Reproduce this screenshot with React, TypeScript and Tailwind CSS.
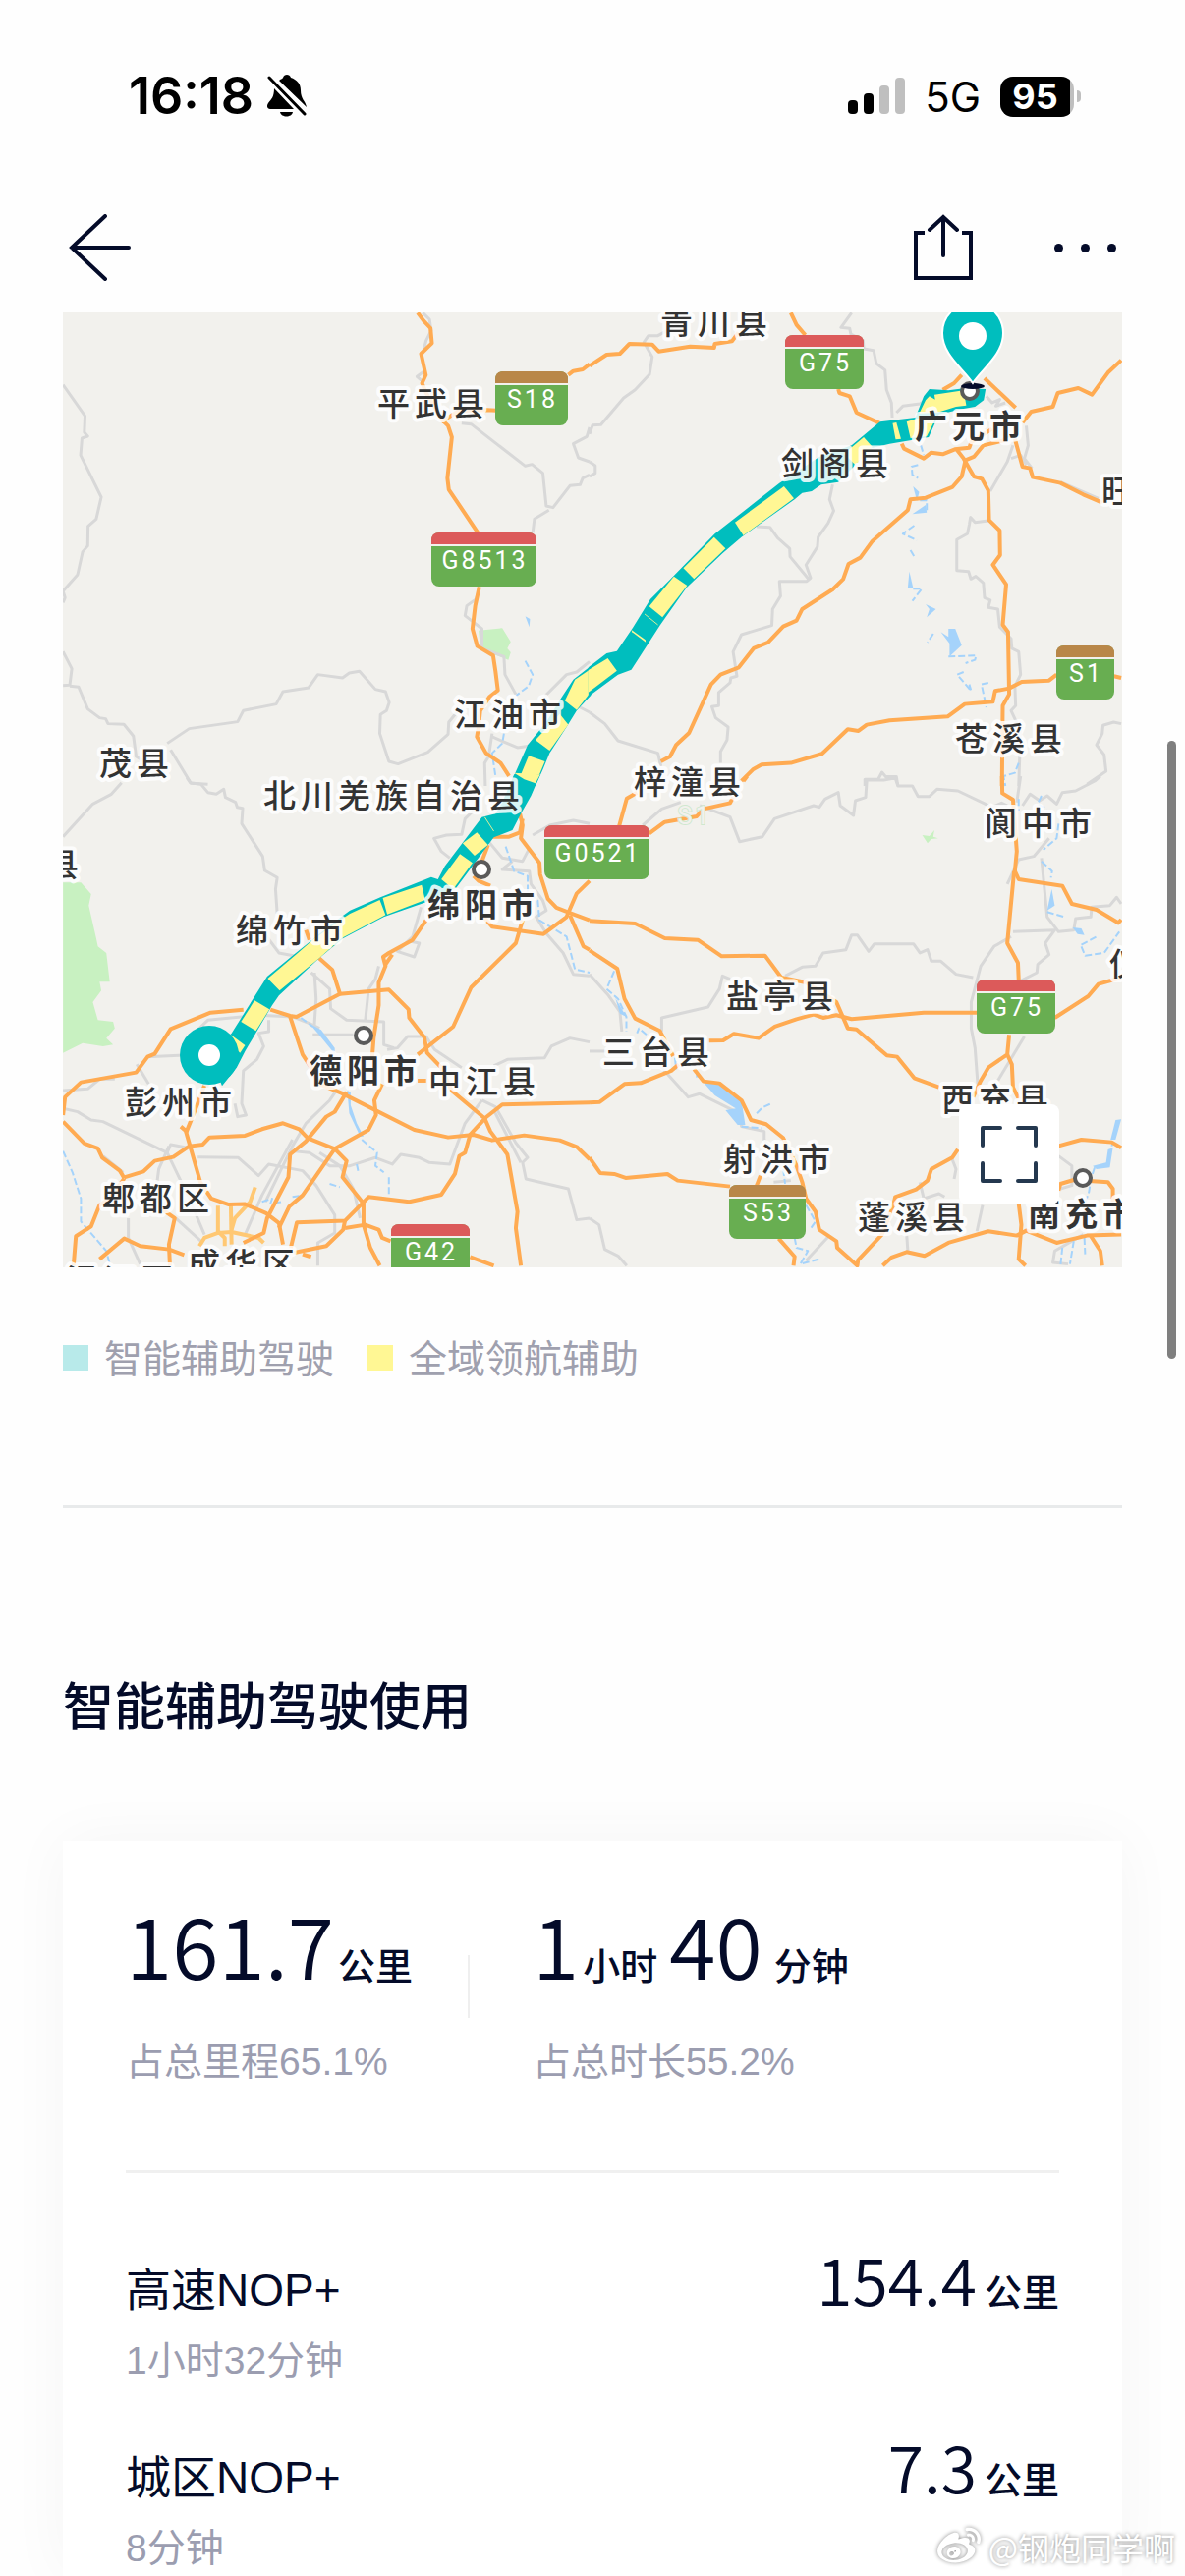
import type { ReactNode } from 'react'
import { FaWeibo } from 'react-icons/fa'

const LATIN = "font-['Liberation_Sans','Noto_Sans_CJK_SC',sans-serif]"
const NUMERIC = "font-['Noto_Sans_CJK_SC',sans-serif]"

type Tile = {
  transform: string
  parks: string[]
  minor: string[]
  water: string[]
  rivers: string[]
  roads: string[]
  cityRoads: string[]
  route: string
  nop: string[]
  nopTicks: string[]
}

// The base map is cut in four tiles, each with its own grid
const tiles: Tile[] = [
  {
    transform: 'translate(-4 -8) scale(.3444 .3333)',
    parks: ['1240,995 1310,988 1335,1030 1325,1050 1335,1062 1328,1085 1290,1070 1245,1045'],
    minor: [
      '12,245 77,340 75,390 85,402 68,408 64,460 125,588 110,655 86,677 85,737 70,755 55,825 12,875 18,895 12,910',
      '12,1060 38,1112 32,1162 12,1163',
      '32,1165 58,1168 85,1235 120,1262 138,1265 145,1280 192,1282 220,1318 228,1380 260,1400',
      '320,1340 385,1295 528,1274 545,1240 642,1220 662,1182 738,1170 765,1130 838,1140 858,1125 888,1120 935,1175 965,1182 976,1215 968,1240 950,1252 948,1310 975,1395 1002,1403 1090,1367 1150,1312 1152,1275 1180,1240',
      '330,1360 390,1462 440,1465',
      '1190,362 1218,365 1378,493 1398,488 1430,515 1440,615 1460,620 1510,553 1540,550 1548,530 1568,520',
      '1448,628 1405,655 1400,697',
      '1568,375 1560,403 1520,425 1535,468 1568,480',
      '1075,25 1095,45 1100,80 1085,110 1075,150',
      '1078,205 1058,220 1075,235',
      '1242,870 1232,900 1205,920 1200,950 1250,990 1250,1050 1315,1075 1318,1130 1350,1190',
      '1437,1195 1500,1130 1530,1122 1568,1090',
      '1500,1200 1540,1230 1568,1245',
      '1280,1320 1355,1353 1390,1348',
      '1280,1310 1270,1380 1258,1400 1260,1470',
    ],
    water: ['1378,952 1392,960 1390,985'],
    rivers: ['1378,1088 1400,1130 1388,1165 1350,1195', '1315,1310 1310,1340 1280,1370 1290,1440'],
    roads: [
      '1060,25 1078,50 1098,72 1102,118 1070,150 1084,215 1073,240 1085,270 1135,355 1150,370 1161,405 1148,530 1152,565 1238,697',
      '1130,358 1180,325 1265,322 1292,323',
      '1505,215 1520,203 1548,198 1568,182',
      '1242,862 1230,920 1222,990 1236,1043 1283,1072 1290,1120 1297,1178 1272,1198 1245,1240 1240,1290 1235,1320 1262,1370 1305,1400 1330,1440',
    ],
    cityRoads: [],
    route: '1572,1103 1520,1145 1485,1200 1440,1275 1385,1345 1340,1450 1408,1470 1430,1420 1450,1370 1500,1290 1530,1240 1572,1193',
    nop: [
      '1572,1112 1525,1145 1495,1210 1530,1238 1572,1182',
      '1480,1250 1505,1283 1450,1362 1408,1330',
      '1388,1378 1436,1395 1410,1460 1363,1440',
    ],
    nopTicks: [],
  },
  {
    transform: 'translate(536 -8) scale(.3865 .3333)',
    parks: [],
    minor: [
      '235,60 180,95 155,95 143,115 165,160 158,213 120,260 90,285 30,367 8,368 0,395',
      '0,480 15,492 15,515 0,525',
      '690,25 662,70 685,73 688,90 720,110 722,135 748,140 755,180 778,200 782,260 795,300 797,345',
      '808,330 825,310 870,303 920,265',
      '1045,280 1060,300 1080,290 1070,310 1095,300',
      '1115,430 1100,480 1055,570',
      '1150,370 1155,430 1145,470 1165,500',
      '1110,470 1135,460 1150,490',
      '640,550 632,595 643,630 628,668 602,710 600,740 570,795 582,835 572,845 500,845 503,890 482,930 480,980 400,1008 378,1060 388,1135 372,1140 370,1155 340,1185 340,1225 322,1228 332,1262 365,1290 362,1330 345,1365 345,1400',
      '440,678 475,680 495,712 527,745 528,770 578,840',
      '1050,660 1015,665 1003,650 1000,672 995,700 967,718 967,812 998,815 1004,838 1017,830 1037,850 1040,895 1055,903 1050,925 1075,930 1080,985 1110,1020 1112,1050 1130,1060 1135,1130 1120,1165 1122,1225 1110,1240 1120,1265 1135,1300 1130,1470',
      '0,1245 40,1280 75,1332 180,1370 188,1410',
      '1400,1280 1380,1275 1352,1285 1350,1310 1335,1345 1355,1375 1360,1425 1310,1465',
      '1240,542 1340,592',
      '725,1470 725,1450 760,1450 770,1428 780,1442 808,1442 812,1470',
    ],
    water: [
      '852,555 868,572 862,600',
      '885,612 888,635 850,640',
      '842,815 852,865 838,865',
      '885,915 912,930 888,955 895,930',
      '925,1000 945,1015 945,990 963,990 980,1040 948,1075 948,1035',
    ],
    rivers: [
      '865,400 880,460',
      '865,490 848,495 850,520 865,530',
      '870,598 888,598 888,630',
      '855,675 825,700 862,720',
      '845,750 858,775',
      '852,868 875,868 850,905',
      '905,1005 890,1032',
      '945,1075 1018,1072 1015,1085 990,1095',
      '985,1122 968,1130 1005,1180 1000,1160',
      '1050,1155 1032,1160 1045,1230',
      '1130,1400 1120,1430 1090,1440 1095,1470',
    ],
    roads: [
      '0,187 45,153 80,150 105,120 165,122 182,143 265,128 328,132 330,120 375,112 392,85',
      '530,25 545,62 568,93',
      '655,258 658,270 685,280 703,330 763,362',
      '822,425 828,440 880,470 900,452 930,457 962,442 1000,437 1005,420 1060,380',
      '965,440 985,470 1012,525 1033,532 1050,568 1052,658 1080,690 1081,765 1062,795 1097,855 1088,978 1102,1000 1105,1190 1088,1225 1086,1470',
      '1100,400 1090,415 1037,430 1012,465 990,475 980,525 955,558 885,590 845,595 838,628 745,722 713,773 682,792 668,838 640,870 560,930 545,965 510,983 470,1032 432,1050 393,1108 345,1130 320,1160 262,1308 228,1345 212,1380 188,1395',
      '1400,170 1365,208 1323,275 1287,255 1233,270 1220,312 1163,327 1140,360',
      '1040,225 1122,315',
      '1120,410 1140,495 1160,500 1167,527 1240,545 1300,580 1350,605',
      '980,215 960,240 930,260',
      '1230,1130 1210,1148 1138,1152 1105,1172 1068,1180 1062,1213 988,1220 943,1258 790,1270 730,1283 708,1302 680,1297 612,1372 530,1400 453,1405 430,1420 400,1455',
      '1381,1135 1400,1140',
    ],
    cityRoads: [],
    route: '-3,1197 75,1130 110,1115 185,980 255,865 350,760 400,710 540,595 560,575 585,570 610,550 655,542 700,490 735,440 790,425 893,405 920,335 985,318 1015,312 1038,292 1043,258 990,255 945,262 895,258 880,280 858,345 765,358 690,430 605,465 500,545 330,700 220,830 160,900 115,985 72,1058 45,1065 -3,1108',
    nop: [
      '885,292 895,280 910,290 908,275 985,262 992,308 965,312 915,330 868,332',
      '835,358 862,348 915,340 888,402 845,408',
      '798,362 808,360 820,410 806,412',
      '722,405 745,435 700,490 670,455',
      '512,555 538,592 405,705 383,665',
      '328,710 358,745 275,838 247,805',
      '222,830 257,858 192,955 157,922',
      '48,1080 72,1118 -3,1184 -3,1116',
      '110,993 147,1024 148,1031 112,1000',
    ],
    nopTicks: ['145,945 180,978'],
  },
  {
    transform: 'translate(-4 472) scale(.3444 .3333)',
    parks: [
      '12,325 65,325 95,360 88,395 110,495 115,520 140,540 150,628 120,628 125,655 100,690 115,745 160,750 165,770 140,800 160,820 130,825 70,815 12,845',
    ],
    minor: [
      '185,20 155,55 100,85 12,185',
      '378,5 388,20 420,25 440,50 465,55 487,40 492,65 522,80 527,95 543,98 540,145 602,245 608,288 645,310 640,345 645,420',
      '600,470 650,540 700,550',
      '1235,60 1225,105 1200,130 1190,178 1145,180 1108,190 1130,230 1155,250',
      '12,960 85,955 120,925 165,925',
      '12,1015 55,1025 95,1050 130,1055 190,1085 320,1150 330,1125 380,1135',
      '230,880 265,940',
      '260,857 370,852',
      '400,785 440,745 590,730 690,735 740,755 770,770',
      '620,745 620,780 590,785 605,825 585,865 545,900 540,1000 553,1035 528,1040 520,1000',
      '755,600 760,680 755,760',
      '745,600 800,650 803,710 850,745 960,750 960,820 990,830',
      '750,790 870,790',
      '1070,400 1045,490 1000,535 1050,552 1065,510 1040,505',
      '945,580 935,620 915,650 905,750',
      '970,835 1000,830 1030,795 1085,795 1110,835 1190,890',
      '1285,885 1325,865 1435,860 1455,825 1510,800 1568,812',
      '1250,990 1200,1060 1155,1185 1095,1180 1065,1165 1010,1155 985,1185 935,1165 860,1190 800,1190 740,1150 690,1145',
      '1250,990 1290,1010 1350,1120 1385,1165 1370,1180 1380,1230 1505,1260 1530,1355 1568,1350',
      '1285,1020 1365,1180',
      '410,1163 530,1165 590,1220 620,1185 720,1205 760,1250 815,1340 815,1395 765,1425 765,1495',
      '690,1110 600,1280 550,1400',
      '820,960 800,990 730,1060 690,1130 610,1300',
      '320,1150 385,1290 430,1400',
      '325,1130 295,1200 290,1240',
      '345,1350 420,1420',
      '205,1350 205,1410 240,1490',
      '130,1160 190,1210',
      '1400,180 1450,150 1520,135 1568,145',
      '1270,200 1310,250 1370,260 1390,220',
      '1340,260 1310,285 1390,290 1395,330 1430,380 1440,410 1410,430 1440,480 1490,540 1520,605 1568,610',
      '770,1150 830,1190 870,1260 890,1350',
    ],
    water: ['740,755 775,775 815,830 815,848 765,785', '852,960 862,965 862,1005 880,1060 900,1100 890,1100 858,1030'],
    rivers: [
      '12,1145 40,1210 65,1290 65,1360 140,1450 150,1490',
      '715,738 750,765',
      '895,1110 940,1150 935,1190 960,1210',
      '880,1185 885,1210',
      '975,1225 975,1280',
      '600,1300 630,1290 625,1305 660,1300',
      '690,1285 720,1280',
      '800,1245 830,1255',
      '1320,215 1345,290 1385,305 1385,350 1415,380 1420,440 1500,490 1525,590 1568,600',
    ],
    roads: [
      '12,1035 18,980 65,935 228,905 262,857 283,848 330,772 448,722 545,713',
      '12,1055 75,1122 115,1137 128,1165 180,1205 193,1228',
      '193,1225 250,1207 283,1175 338,1163 385,1130 425,1125 445,1103 550,1098 600,1078 662,1060 710,1078 735,1105 815,1138 850,1175 838,1225 900,1305 900,1370 920,1440 948,1495',
      '430,945 410,1000 377,1085 360,1070',
      '375,1085 418,1240 450,1290 500,1308 550,1307 612,1335 650,1365 662,1430',
      '625,713 683,732 702,735 830,665 975,652 1033,712 1035,738 1080,798 1088,845 1130,890 1160,960 1258,1045 1275,1085 1325,1155 1355,1330 1350,1380 1365,1495',
      '768,555 808,592 832,670',
      '730,470 740,500',
      '683,735 720,850 745,890 770,940 835,968 1050,1080 1150,1103 1225,1095 1280,1112 1375,1097 1480,1112 1530,1132 1568,1170',
      '1568,997 1310,1003 1262,1042 1215,1095 1200,1150 1183,1160 1170,1215 1130,1278 1035,1300 915,1285 845,1358 703,1363 685,1440',
      '1085,440 1045,500 975,540 958,552 965,580 945,630 945,700 930,800 925,870',
      '965,575 985,545',
      '1060,850 1165,765 1218,645 1350,510 1370,440',
      '1060,930 1085,930',
      '955,940 932,990 937,1035 915,1080 815,1138 720,1280 680,1315 650,1380',
      '850,965 815,1025 790,1040 730,1115 683,1155 678,1225 615,1350 605,1395 545,1425',
      '845,1358 840,1385 790,1435 695,1455',
      '845,1380 905,1370 945,1385 955,1410 980,1420',
      '193,1228 150,1290 120,1310 95,1375 50,1405 43,1495',
      '120,1475 193,1412 240,1435 325,1445 370,1462',
      '300,1320 342,1350 325,1430 328,1495',
      '720,1460 745,1468',
      '1215,1468 1285,1495',
      '1275,185 1330,185 1362,172 1370,130',
      '1362,115 1370,150 1365,190 1420,265 1422,300 1445,375 1470,402 1515,420 1568,440',
      '1268,210 1250,260',
      '1225,305 1240,320 1275,335',
      '1568,320 1530,358 1500,430 1432,482 1280,460 1255,430',
      '1510,425 1550,520 1568,530',
    ],
    cityRoads: [
      '580,1255 565,1300 520,1350 510,1385',
      '470,1312 470,1390 490,1410 490,1435',
      '508,1312 510,1430',
      '415,1435 430,1410 470,1395 510,1392 590,1410 605,1425',
    ],
    route: '1345,-5 1310,80 1290,115 1250,125 1195,200 1140,275 1120,315 1100,308 950,370 860,410 820,440 700,540 615,612 510,785 445,853 482,946 525,890 550,840 630,700 650,670 770,555 840,495 960,430 1085,385 1175,340 1285,187 1340,165 1365,115 1395,60 1422,-5',
    nop: [
      '1345,-10 1422,-5 1408,22 1375,10',
      '1235,172 1268,210 1228,243 1193,205',
      '1185,238 1222,265 1165,345 1130,315',
      '1072,332 1082,378 970,422 957,372',
      '948,378 965,424 835,495 770,555 652,655 617,618 700,545 750,500 830,440 860,420',
      '578,685 622,712 582,778 538,750',
      '508,790 550,822 535,845 522,830',
    ],
    nopTicks: ['1258,125 1285,168'],
  },
  {
    transform: 'translate(536 472) scale(.3865 .3333)',
    parks: ['876,180 895,183 908,165 905,185 918,190 900,192 890,205'],
    minor: [
      '140,150 190,100 240,80',
      '290,90 370,125 395,200 455,185 487,130 590,90 605,95 620,70 655,50 660,90 695,120 700,75 727,65 730,12 775,12 805,5 812,30 850,30 865,62 895,62 915,40 970,45 1060,95 1085,82 1100,90',
      '1345,0 1330,15 1280,45 1245,50 1230,85 1205,60 1185,75 1160,55 1140,90',
      '1135,0 1125,80',
      '1210,190 1170,245 1130,255 1100,330',
      '1190,250 1205,430 1235,475 1275,470 1280,435 1320,430 1322,400 1370,395 1388,370 1400,390',
      '1115,475 1225,470 1200,510 1210,545 1180,575 1178,600 1135,625',
      '1110,490 1065,520 1030,580 1005,690 1005,770 1015,830 1022,940',
      '515,610 560,583 595,580 615,540 675,530 690,485 705,485 735,535 750,512 853,512 870,540 890,530 900,565 925,565 965,605 1010,615',
      '370,620 350,610 342,650 312,705 190,738 190,780',
      '0,605 50,670 80,720 85,780',
      '0,840 45,840',
      '190,890 260,980 290,970 395,1030 400,1070 460,1085 460,1110 480,1140',
      '1145,795 1075,930',
      '1235,1160 1270,1190 1270,1250 1240,1260',
      '955,1170 965,1200 960,1230',
      '870,1240 880,1290 920,1275 935,1285',
      '1035,1310 1020,1390',
      '835,1400 838,1450',
      '0,1350 25,1370 40,1445 75,1465 98,1495',
      '630,1405 570,1480',
      '1300,1400 1225,1450 1220,1485 1260,1490',
      '485,1240 530,1235',
    ],
    water: [
      '300,935 342,942 375,975 400,990 410,1065 390,1065 358,1020 385,1015 330,975',
      '68,678 97,735 80,725',
      '1217,345 1225,395 1205,410',
      '1272,462 1295,465 1303,485 1285,482',
      '1385,1050 1400,1048 1385,1110 1372,1110',
      '1365,1140 1378,1135 1370,1195 1335,1200 1325,1190 1360,1180',
      '280,905 292,918 280,920',
    ],
    rivers: [
      '65,595 45,650 75,680 97,735 97,780',
      '150,790 130,770 125,785',
      '225,860 228,895',
      '440,1030 455,1012 478,1000',
      '400,1070 455,1075',
      '1190,60 1180,85 1205,100',
      '1130,70 1130,105',
      '1235,145 1230,190 1195,225',
      '1190,260 1218,290 1215,310',
      '1205,415 1250,430',
      '1295,515 1335,490',
      '1295,520 1305,548 1355,540 1395,475',
      '1390,1060 1375,1130',
      '1330,1195 1320,1230 1315,1270 1300,1320',
      '510,1200 515,1245',
      '570,1310 595,1360 580,1385',
      '540,1410 545,1440 575,1450 555,1490 605,1475',
      '1245,1440 1240,1495',
      '1275,1420 1265,1490',
      '1303,1410 1305,1460',
    ],
    roads: [
      '0,442 120,450 198,495 285,500 348,550 462,548 505,615 570,630 650,690 680,770 703,773 783,853 810,857 855,922 920,950',
      '0,532 73,588 92,680 120,740 185,778 220,855',
      '125,50 98,68 78,152',
      '415,0 405,15',
      '157,175 198,140 282,123 300,100 370,82 378,65',
      '1086,0 1087,52 1115,72 1125,230 1120,290 1130,315 1245,335 1270,390 1335,408 1392,448 1400,438',
      '1118,290 1100,510 1128,570 1130,622',
      '1225,738 1313,672 1340,635 1400,615',
      '1020,722 880,722 690,742 650,730 615,738 590,728 545,742 488,765 445,800 380,787 352,807 315,808',
      '0,997 27,995 92,940 135,937 215,900 235,880',
      '275,895 300,932 342,938 400,990 425,1050 465,1063 510,1105 545,1190 560,1240 570,1290 595,1330 605,1385 650,1420 652,1440 705,1495 707,1478 770,1400 800,1310 805,1285 860,1262 890,1235 900,1200 955,1165 970,1140',
      '450,1220 440,1250',
      '0,1165 28,1212 65,1215 95,1227 205,1215 232,1235 370,1253',
      '498,1412 540,1467 537,1495',
      '772,1495 795,1470 835,1453 882,1465 945,1425 1050,1390 1125,1403 1150,1388 1230,1425 1310,1403 1400,1400',
      '1130,1305 1137,1370 1130,1475 1148,1495',
      '1105,790 1100,850 1050,890 1030,930 1010,980',
      '1100,850 1112,880 1115,950 1130,985',
      '1233,1130 1295,1110 1375,1118 1400,1135',
      '1235,1265 1240,1245 1275,1233 1365,1240 1378,1260 1378,1300',
      '1320,1405 1345,1450 1350,1495',
    ],
    cityRoads: [],
    route: '',
    nop: [],
    nopTicks: [],
  },
]

const places = [
  { name: '青川县', x: 608, y: 22 },
  { name: '平武县', x: 320, y: 105 },
  { name: '剑阁县', x: 731, y: 166 },
  { name: '旺苍县', x: 1057, y: 194 },
  { name: '江油市', x: 398, y: 421 },
  { name: '苍溪县', x: 908, y: 446 },
  { name: '茂县', x: 37, y: 471 },
  { name: '梓潼县', x: 581, y: 490 },
  { name: '北川羌族自治县', x: 204, y: 504 },
  { name: '阆中市', x: 938, y: 532 },
  { name: '县', x: -17, y: 574 },
  { name: '绵竹市', x: 176, y: 641 },
  { name: '仪陇县', x: 1065, y: 675 },
  { name: '盐亭县', x: 675, y: 708 },
  { name: '三台县', x: 549, y: 765 },
  { name: '中江县', x: 372, y: 795 },
  { name: '西充县', x: 894, y: 813 },
  { name: '彭州市', x: 63, y: 816 },
  { name: '射洪市', x: 672, y: 874 },
  { name: '郫都区', x: 40, y: 914 },
  { name: '蓬溪县', x: 809, y: 933 },
  { name: '成华区', x: 127, y: 981 },
  { name: '温江区', x: 3, y: 998 },
]

const cities = [
  { name: '广元市', x: 867, y: 128, cx: 923, cy: 80 },
  { name: '绵阳市', x: 371, y: 615, cx: 426, cy: 567 },
  { name: '德阳市', x: 251, y: 784, cx: 306, cy: 736 },
  { name: '南充市', x: 982, y: 930, cx: 1038, cy: 881 },
]

const shields = [
  { name: 'S18', x: 440, y: 60, w: 74, cap: '#b98749' },
  { name: 'G75', x: 735, y: 23, w: 80, cap: '#dc5a5a' },
  { name: 'G8513', x: 375, y: 224, w: 107, cap: '#dc5a5a' },
  { name: 'S1', x: 1011, y: 339, w: 59, cap: '#b98749' },
  { name: 'G0521', x: 490, y: 522, w: 107, cap: '#dc5a5a' },
  { name: 'G75', x: 930, y: 679, w: 80, cap: '#dc5a5a' },
  { name: 'S53', x: 678, y: 888, w: 78, cap: '#b98749' },
  { name: 'G42', x: 334, y: 928, w: 80, cap: '#dc5a5a' },
]

function Lines({ points, stroke, width, dash }: { points: string[]; stroke: string; width: number; dash?: string }) {
  return (
    <g fill="none" stroke={stroke} strokeWidth={width} strokeLinejoin="round" strokeDasharray={dash}>
      {points.map((p) => (
        <polyline key={p} points={p} vectorEffect="non-scaling-stroke" />
      ))}
    </g>
  )
}

function Areas({ points, fill }: { points: string[]; fill: string }) {
  return (
    <g fill={fill}>
      {points.map((p) => (
        <polygon key={p} points={p} />
      ))}
    </g>
  )
}

function RouteMap() {
  return (
    <svg viewBox="0 0 1078 972" className="block h-auto w-full bg-[#f2f1ed]" role="img" aria-label="行程路线">
      {tiles.map((t) => (
        <g key={t.transform} transform={t.transform}>
          <Areas points={t.parks} fill="#c8f1c1" />
          <Lines points={t.minor} stroke="#d8d8d8" width={3} />
          <Areas points={t.water} fill="#a5d3fb" />
          <Lines points={t.rivers} stroke="#a5d3fb" width={2} dash="7 3" />
          <Lines points={t.cityRoads} stroke="#ffc873" width={4} />
          <Lines points={t.roads} stroke="#ffab52" width={4} />
        </g>
      ))}
      {tiles.map((t) => (
        <g key={t.transform} transform={t.transform}>
          <polygon points={t.route} fill="#00bebe" />
          <Areas points={t.nop} fill="#fff794" />
          <Lines points={t.nopTicks} stroke="#d8ee9a" width={1} />
        </g>
      ))}

      {cities.map((c) => (
        <circle key={c.name} cx={c.cx} cy={c.cy} r="8" fill="#fff" stroke="#5a5a5a" strokeWidth="4" />
      ))}

      <g
        className="font-['Noto_Sans_CJK_SC',sans-serif] text-[33px] tracking-[5px]"
        fill="#333"
        stroke="#fff"
        strokeOpacity=".85"
        strokeWidth="8"
        strokeLinejoin="round"
        paintOrder="stroke"
      >
        {places.map((p) => (
          <text key={p.name} x={p.x} y={p.y} className="font-medium">
            {p.name}
          </text>
        ))}
        {cities.map((c) => (
          <text key={c.name} x={c.x} y={c.y} className="font-bold">
            {c.name}
          </text>
        ))}
      </g>

      <g className="font-['Roboto',sans-serif] text-[25px] tracking-[3px]" fill="#fff" textAnchor="middle">
        <text x="643" y="521" fill="#f2f1ed" stroke="#cfe8cf" strokeWidth="2" paintOrder="stroke">
          S1
        </text>
        {shields.map((s) => (
          <g key={`${s.name}-${s.x}`}>
            <rect x={s.x} y={s.y} width={s.w} height="55" rx="8" fill="#68ae51" />
            <path
              d={`M${s.x} ${s.y + 12}v-4q0-8 8-8h${s.w - 16}q8 0 8 8v4z`}
              fill={s.cap}
            />
            <path d={`M${s.x} ${s.y + 13}h${s.w}`} stroke="#f2f1ed" strokeWidth="2" />
            <text x={s.x + s.w / 2 + 1} y={s.y + 37}>
              {s.name}
            </text>
          </g>
        ))}
      </g>

      {/* start */}
      <circle cx="149" cy="756" r="30" fill="#00bebe" />
      <circle cx="149" cy="756" r="11" fill="#fff" />

      {/* destination */}
      <ellipse cx="926" cy="75" rx="12" ry="3" fill="#040b29" />
      <path
        d="M926 72C916 57 895 43 895 21a31 31 0 0 1 62 0C957 43 936 57 926 72Z"
        fill="#00bebe"
        stroke="#fff"
        strokeWidth="2"
      />
      <circle cx="926" cy="24" r="14" fill="#fff" />
    </svg>
  )
}

function StatusBar() {
  return (
    <div className="flex h-[196px] shrink-0 items-center justify-between pr-[106px] pl-[131px] font-['Inter',sans-serif] text-black">
      <div className="flex items-center gap-[14px]">
        <span className="text-[52px] font-semibold">16:18</span>
        <svg viewBox="0 0 40 44" className="h-11 w-10">
          <path d="M12 6C14 4 16 4 16 3c1-4 7-4 8 0 6 2 10 6 10 13 0 9 5 11 6 17L12 6Z" />
          <path d="M7 14 27 35H3c-3 0-4-3-2-6 3-4 6-6 6-15Z" />
          <path d="M13 38h13c-1 6-12 6-13 0Z" />
          <path d="M2 3 38 40" stroke="#000" strokeWidth="3" strokeLinecap="round" />
        </svg>
      </div>
      <div className="flex items-center">
        <svg viewBox="0 0 58 38" className="h-[38px] w-[58px]">
          <rect x="0" y="23" width="10" height="14" rx="4" />
          <rect x="16" y="16" width="10" height="21" rx="4" />
          <rect x="32" y="8" width="10" height="29" rx="4" fill="#bfbfbf" />
          <rect x="48" y="0" width="10" height="37" rx="4" fill="#bfbfbf" />
        </svg>
        <span className="ml-5 text-[42px]">5G</span>
        <div className="ml-5 flex h-[41px] w-[75px] overflow-hidden rounded-[13px] bg-[#bfbfbf]">
          <span className="flex w-[71px] items-center justify-center bg-black text-[36px] font-bold text-white">
            95
          </span>
        </div>
        <span className="ml-[3px] h-3 w-1 rounded-r-full bg-[#bfbfbf]" />
      </div>
    </div>
  )
}

function NavBar() {
  return (
    <nav className="mb-[10px] flex h-28 shrink-0 items-center justify-between pr-[66px] pl-[70px]">
      <button type="button" aria-label="返回">
        <svg viewBox="0 0 64 68" className="h-[68px] w-16" fill="none" stroke="#040b29" strokeWidth="4" strokeLinecap="round">
          <path d="M37 2 3 34l34 32M3 34h58" />
        </svg>
      </button>
      <div className="flex items-center gap-[78px]">
        <button type="button" aria-label="分享">
          <svg viewBox="0 0 62 68" className="h-[68px] w-[62px]" fill="none" stroke="#040b29" strokeWidth="4">
            <path d="M12 19H3v46h56V19H50" />
            <path d="M31 42V3M17 16 31 3l14 13" strokeLinecap="round" />
          </svg>
        </button>
        <button type="button" aria-label="更多" className="flex gap-[18px] p-1">
          <span className="size-[9px] rounded-full bg-[#040b29]" />
          <span className="size-[9px] rounded-full bg-[#040b29]" />
          <span className="size-[9px] rounded-full bg-[#040b29]" />
        </button>
      </div>
    </nav>
  )
}

function LegendItem({ color, label }: { color: string; label: string }) {
  return (
    <li className="flex items-center gap-4">
      <span className={`mt-1 size-[26px] ${color}`} />
      {label}
    </li>
  )
}

function Unit({ children }: { children: ReactNode }) {
  return <span className="text-[38px] font-medium">{children}</span>
}

function UsageRow({ label, time, distance }: { label: string; time: string; distance: string }) {
  return (
    <li>
      <div className="flex items-baseline justify-between leading-[64px]">
        <span className={`text-[46px] ${LATIN}`}>{label}</span>
        <span className={`flex items-baseline gap-2 ${NUMERIC}`}>
          <span className="text-[66px] font-[350]">{distance}</span>
          <Unit>公里</Unit>
        </span>
      </div>
      <p className={`mt-[14px] text-[39px] leading-[52px] text-[#9b9db0] ${LATIN}`}>{time}</p>
    </li>
  )
}

function UsageCard() {
  return (
    <section className="grow bg-white px-16 pt-14 shadow-[0_0_60px_rgba(0,0,0,0.04)]">
      <div className="flex">
        <div className="w-[348px]">
          <p className={`flex items-baseline gap-1 leading-[96px] ${NUMERIC}`}>
            <span className="text-[86px] font-[350]">161.7</span>
            <Unit>公里</Unit>
          </p>
          <p className={`mt-[22px] text-[39px] leading-[60px] text-[#9b9db0] ${LATIN}`}>占总里程65.1%</p>
        </div>
        <div className="mt-15 h-16 w-[2px] bg-[#efefef]" />
        <div className="ml-16">
          <p className={`flex items-baseline gap-3 leading-[96px] ${NUMERIC}`}>
            <span className="flex items-baseline gap-1">
              <span className="text-[86px] font-[350]">1</span>
              <Unit>小时</Unit>
            </span>
            <span className="flex items-baseline gap-3">
              <span className="text-[86px] font-[350]">40</span>
              <Unit>分钟</Unit>
            </span>
          </p>
          <p className={`mt-[22px] text-[39px] leading-[60px] text-[#9b9db0] ${LATIN}`}>占总时长55.2%</p>
        </div>
      </div>
      <hr className="mt-20 border-t-[3px] border-[#f0f0f0]" />
      <ul className="mt-[74px] flex flex-col gap-12">
        <UsageRow label="高速NOP+" time="1小时32分钟" distance="154.4" />
        <UsageRow label="城区NOP+" time="8分钟" distance="7.3" />
      </ul>
    </section>
  )
}

export default function App() {
  return (
    <div className="relative flex h-screen flex-col overflow-hidden bg-[#fefefe] text-[#040b29]">
      <StatusBar />
      <NavBar />
      <main className="flex grow flex-col px-16">
        <div className="relative">
          <RouteMap />
          <button
            type="button"
            aria-label="全屏"
            className="absolute right-16 bottom-16 flex size-[102px] items-center justify-center rounded-lg bg-white"
          >
            <svg viewBox="0 0 58 58" className="size-[58px]" fill="none" stroke="#24384f" strokeWidth="4" strokeLinecap="round" strokeLinejoin="round">
              <path d="M2 20V2h18M38 2h18v18M56 38v18H38M20 56H2V38" />
            </svg>
          </button>
        </div>

        <ul className="mt-[60px] flex gap-[34px] font-['Noto_Sans_CJK_SC',sans-serif] text-[39px] leading-[60px] text-[#9fa0ae]">
          <LegendItem color="bg-[#b8eaea]" label="智能辅助驾驶" />
          <LegendItem color="bg-[#fff794]" label="全域领航辅助" />
        </ul>

        <hr className="mt-[122px] border-t-[3px] border-[#e8eaeb]" />

        <h2 className="mt-[163px] mb-[104px] font-['Noto_Sans_CJK_SC',sans-serif] text-[52px] leading-[72px] font-medium">
          智能辅助驾驶使用
        </h2>

        <UsageCard />
      </main>

      <div className="absolute top-[754px] right-[9px] h-[629px] w-[9px] rounded-full bg-[#7f7f7f]" />

      <div className="absolute right-[10px] bottom-2 flex items-center gap-2 font-['Noto_Sans_CJK_SC',sans-serif] text-[32px] leading-[44px] text-white [text-shadow:0_0_4px_#888]">
        <FaWeibo className="size-11 drop-shadow-[0_0_2px_#888]" />
        <span>@钢炮同学啊</span>
      </div>
    </div>
  )
}
